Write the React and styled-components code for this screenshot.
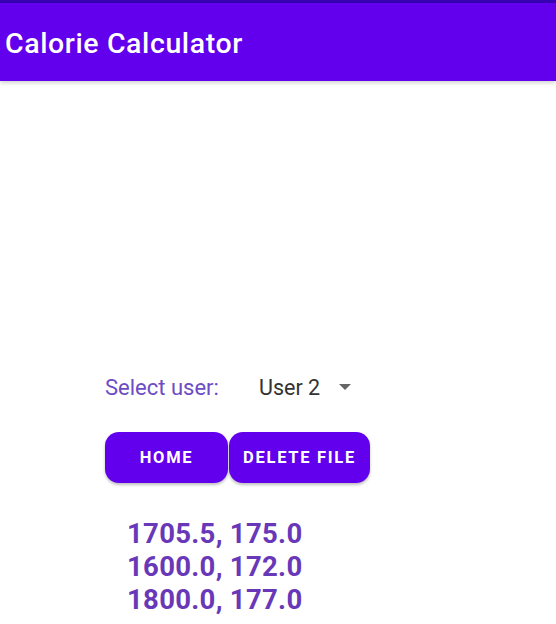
import React from "react";
import styled, { createGlobalStyle } from "styled-components";

const Global = createGlobalStyle`
  html, body { margin: 0; padding: 0; background: #fff; }
  body { font-family: Roboto, "Noto Sans", sans-serif; width: 556px; height: 624px; overflow: hidden; }
`;

const StatusBar = styled.div`
  height: 3px;
  background: #3700b3;
`;

const AppBar = styled.header`
  height: 78px;
  background: #6200ee;
  display: flex;
  align-items: center;
  padding-left: 5px;
  box-shadow: 0 2px 4px rgba(0,0,0,0.18);
`;

const Title = styled.h1`
  margin: 0;
  padding-top: 4px;
  color: #fff;
  font-size: 28.5px;
  font-weight: 500;
  letter-spacing: 0.6px;
  line-height: 1;
`;

const Content = styled.main`
  padding: 288px 0 0 105px;
  display: flex;
  flex-direction: column;
`;

const SelectRow = styled.div`
  display: flex;
  align-items: center;
  height: 36px;
`;

const Label = styled.span`
  color: #6d4cc4;
  font-size: 22px;
  width: 154px;
`;

const Dropdown = styled.div`
  display: flex;
  align-items: center;
  gap: 19px;
  color: #333;
  font-size: 21.5px;
`;

const Buttons = styled.div`
  display: flex;
  gap: 1px;
  margin-top: 27px;
`;

const Button = styled.button`
  height: 51px;
  width: ${p => p.$w}px;
  border: none;
  border-radius: 14px;
  background: #6200ee;
  color: #fff;
  font-family: Roboto, sans-serif;
  font-size: 16.5px;
  font-weight: 700;
  letter-spacing: 1.7px;
  text-transform: uppercase;
  box-shadow: 0 2px 3px rgba(0,0,0,0.25);
  padding: 0;
`;

const List = styled.div`
  margin: 34px 0 0 22px;
  display: flex;
  flex-direction: column;
`;

const Entry = styled.div`
  color: #6838b8;
  font-size: 27.5px;
  font-weight: 700;
  line-height: 33px;
  letter-spacing: 0.3px;
`;

const data = ["1705.5, 175.0", "1600.0, 172.0", "1800.0, 177.0"];

export default function App() {
  return (
    <>
      <Global />
      <StatusBar />
      <AppBar>
        <Title>Calorie Calculator</Title>
      </AppBar>
      <Content>
        <SelectRow>
          <Label>Select user:</Label>
          <Dropdown>
            <span>User 2</span>
            <svg width="12" height="6" viewBox="0 0 12 6">
              <path d="M0 0 L12 0 L6 6 Z" fill="#666" />
            </svg>
          </Dropdown>
        </SelectRow>
        <Buttons>
          <Button $w={123}>Home</Button>
          <Button $w={141}>Delete File</Button>
        </Buttons>
        <List>
          {data.map(d => <Entry key={d}>{d}</Entry>)}
        </List>
      </Content>
    </>
  );
}
